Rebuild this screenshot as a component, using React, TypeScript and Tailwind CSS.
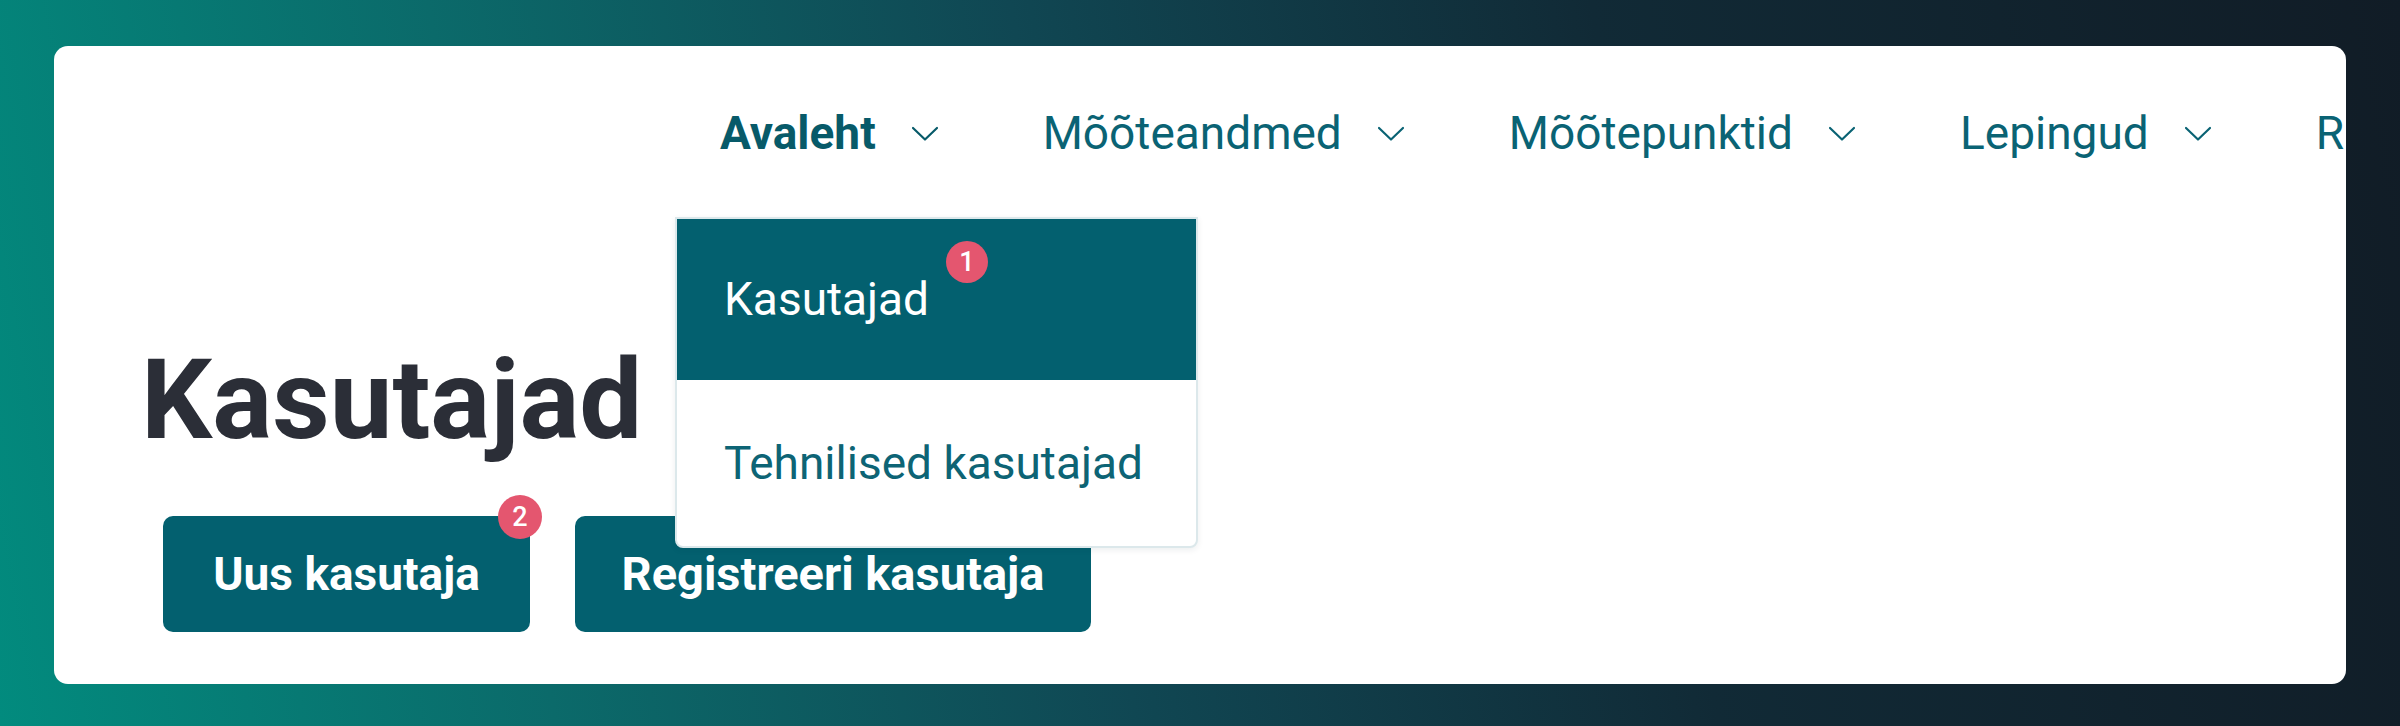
const navItems = [
  { label: "Avaleht", active: true },
  { label: "Mõõteandmed" },
  { label: "Mõõtepunktid" },
  { label: "Lepingud" },
  { label: "Raportid" },
];

const Chevron = () => (
  <svg width="28" height="16" viewBox="0 0 28 16" fill="none" className="shrink-0">
    <polyline
      points="2,2 14,13.5 26,2"
      stroke="currentColor"
      strokeWidth="2.2"
      strokeLinecap="round"
      strokeLinejoin="round"
    />
  </svg>
);

const Badge = ({ n, className }: { n: number; className: string }) => (
  <span
    className={
      "absolute flex items-center justify-center rounded-full bg-[#e4566f] text-[27px] font-medium leading-none text-white " +
      className
    }
  >
    {n}
  </span>
);

export default function App() {
  return (
    <div className="h-[726px] w-full bg-[linear-gradient(80deg,#028b7e_0%,#0b6a6a_22%,#104753_45%,#112a36_68%,#111c26_100%)] px-[54px] pt-[46px] font-['Roboto','Noto_Sans',sans-serif]">
      <div className="relative h-[638px] overflow-hidden rounded-[14px] bg-white">
        <nav className="flex items-center gap-[104px] whitespace-nowrap pl-[666px] pt-[60px] text-[46px] leading-[55px] text-[#0a6374]">
          {navItems.map((item) => (
            <a
              key={item.label}
              href="#"
              className={
                "flex shrink-0 items-center gap-[35px] " +
                (item.active ? "font-bold text-[#075a69]" : "font-normal")
              }
            >
              <span>{item.label}</span>
              <Chevron />
            </a>
          ))}
        </nav>

        <h1 className="mt-[183px] pl-[87px] text-[112px] font-bold leading-none text-[#2b2e37]">
          Kasutajad
        </h1>

        <div className="mt-[60px] flex gap-[45px] pl-[109px]">
          <button className="relative flex h-[116px] w-[367px] items-center justify-center rounded-[10px] bg-[#03606f] text-[46px] font-bold text-white">
            Uus kasutaja
            <Badge n={2} className="-right-[12px] -top-[21px] h-[44px] w-[44px]" />
          </button>
          <button className="flex h-[116px] w-[516px] items-center justify-center rounded-[10px] bg-[#03606f] text-[47px] font-bold text-white">
            Registreeri kasutaja
          </button>
        </div>

        <div className="absolute left-[621px] top-[171px] z-10 w-[523px] overflow-hidden rounded-b-[8px] border-2 border-[#dce8eb] bg-white text-[46px] shadow-[0_2px_6px_rgba(0,40,50,0.08)]">
          <a href="#" className="relative flex h-[161px] items-center bg-[#03606f] pl-[47px] text-white">
            Kasutajad
            <Badge n={1} className="left-[269px] top-[22px] h-[42px] w-[42px]" />
          </a>
          <a href="#" className="flex h-[166px] items-center pl-[47px] text-[#0d6475]">
            Tehnilised kasutajad
          </a>
        </div>
      </div>
    </div>
  );
}
